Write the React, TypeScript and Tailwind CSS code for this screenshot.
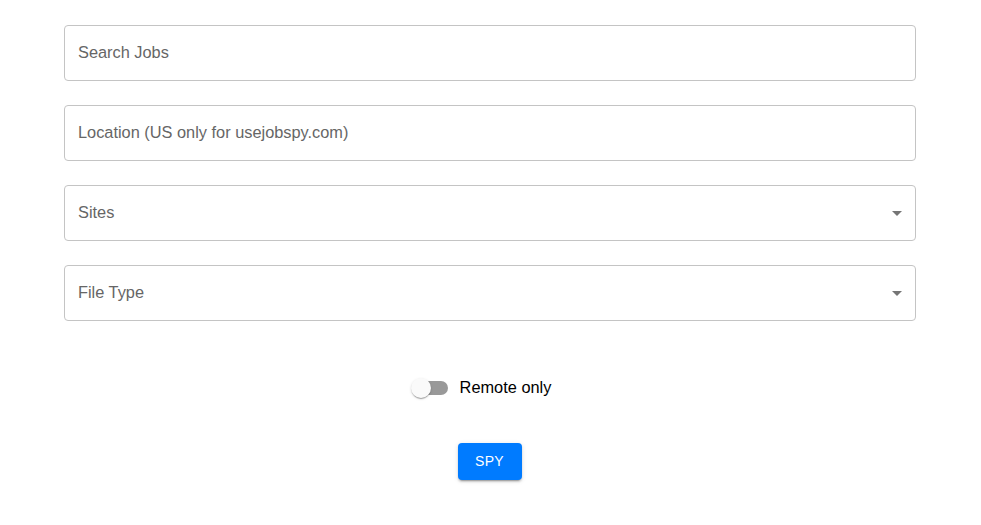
import React from "react";

const Field: React.FC<{ label: string; select?: boolean }> = ({ label, select }) => {
  return (
    <div className="h-[56px] w-full rounded-[4px] border border-[#c4c4c4] bg-white flex items-center pl-[13px] pr-[6px]">
      <span className="flex-1 text-[16.35px] text-[#666666] pb-[2px]">{label}</span>
      {select && (
        <svg width="24" height="24" viewBox="0 0 24 24">
          <path d="M7 10l5 5 5-5z" fill="#757575" />
        </svg>
      )}
    </div>
  );
};

const App: React.FC = () => {
  return (
    <div className="min-h-[525px] bg-white font-['Liberation_Sans',Arial,sans-serif]">
      <div className="w-[852px] ml-[64px] pt-[25px] flex flex-col gap-[24px]">
        <Field label="Search Jobs" />
        <Field label="Location (US only for usejobspy.com)" />
        <Field label="Sites" select />
        <Field label="File Type" select />
      </div>

      <div className="flex justify-center mt-[48px]">
        <label className="flex items-center h-[38px] mr-[28px]">
          <span className="relative w-[58px] h-[38px]">
            <span className="absolute left-[12px] top-[12px] w-[34px] h-[14px] rounded-full bg-black/40" />
            <span className="absolute left-[9px] top-[9px] w-[20px] h-[20px] rounded-full bg-[#fafafa] shadow-[0_2px_1px_-1px_rgba(0,0,0,0.2),0_1px_1px_0_rgba(0,0,0,0.14),0_1px_3px_0_rgba(0,0,0,0.12)]" />
          </span>
          <span className="text-[16.35px] text-black pb-[2px]">Remote only</span>
        </label>
      </div>

      <div className="flex justify-center mt-[36px]">
        <button className="w-[64px] h-[37px] mr-[2px] rounded-[4px] bg-[#007bff] text-white text-[14px] font-medium uppercase tracking-[0.4px] shadow-[0_3px_1px_-2px_rgba(0,0,0,0.2),0_2px_2px_0_rgba(0,0,0,0.14),0_1px_5px_0_rgba(0,0,0,0.12)]">
          Spy
        </button>
      </div>
    </div>
  );
};

export default App;
